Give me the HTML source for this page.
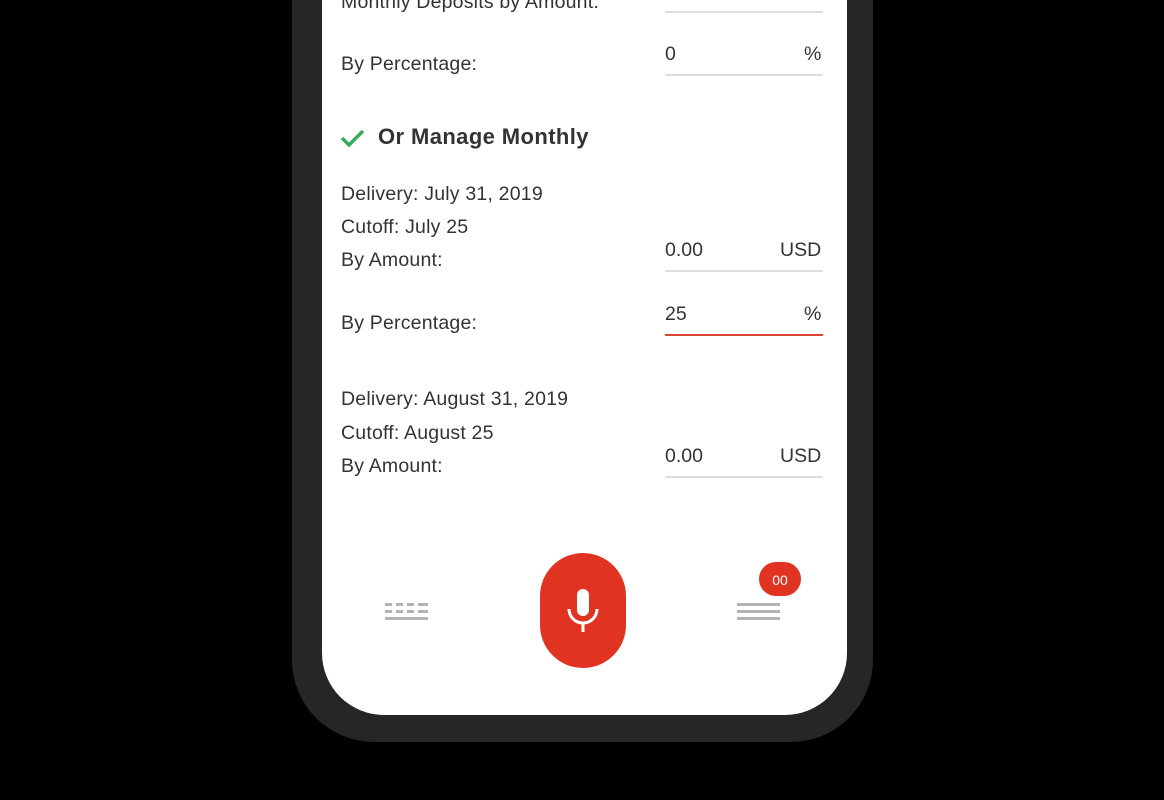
<!DOCTYPE html>
<html><head><style>
body{margin:0;width:1164px;height:800px;background:#000;position:relative;overflow:hidden;font-family:"Liberation Sans",Arial,sans-serif;color:#333}
.frame{position:absolute;left:292px;top:-100px;width:581px;height:842px;background:#262626;border-radius:0 0 82px 82px}
.screen{position:absolute;left:322px;top:-100px;width:525px;height:815px;background:#fff;border-radius:0 0 62px 62px}
.t{position:absolute;font-size:19.5px;letter-spacing:0.2px;white-space:nowrap;line-height:22px}
.f{position:absolute;left:665px;width:158px;border-bottom:2px solid #ddd;height:10px}
.f.red{border-color:#e0432f}
.v{position:absolute;font-size:19.5px;line-height:22px}
.bar{position:absolute;height:3px;background:#b3b3b3}
</style></head><body>
<div class="frame"></div>
<div class="screen"></div>
<div class="t" style="left:341px;top:-9px">Monthly Deposits by Amount:</div>
<div class="f" style="top:1px"></div>
<div class="t" style="left:341px;top:53px">By Percentage:</div>
<div class="v" style="left:665px;top:43px">0</div><div class="v" style="left:804px;top:43px">%</div>
<div class="f" style="top:64px"></div>
<svg style="position:absolute;left:340px;top:127px" width="25" height="22" viewBox="0 0 25 22"><path d="M2 11 L9 18 L23 4" stroke="#3aa85a" stroke-width="3.4" fill="none"/></svg>
<div class="t" style="left:378px;top:126px;font-size:22px;font-weight:bold;letter-spacing:0.4px">Or Manage Monthly</div>
<div class="t" style="left:341px;top:183px">Delivery: July 31, 2019</div>
<div class="t" style="left:341px;top:216px">Cutoff: July 25</div>
<div class="t" style="left:341px;top:249px">By Amount:</div>
<div class="v" style="left:665px;top:239px">0.00</div><div class="v" style="left:780px;top:239px">USD</div>
<div class="f" style="top:260px"></div>
<div class="t" style="left:341px;top:312px">By Percentage:</div>
<div class="v" style="left:665px;top:303px">25</div><div class="v" style="left:804px;top:303px">%</div>
<div class="f red" style="top:324px"></div>
<div class="t" style="left:341px;top:388px">Delivery: August 31, 2019</div>
<div class="t" style="left:341px;top:422px">Cutoff: August 25</div>
<div class="t" style="left:341px;top:455px">By Amount:</div>
<div class="v" style="left:665px;top:445px">0.00</div><div class="v" style="left:780px;top:445px">USD</div>
<div class="f" style="top:466px"></div>
<div class="bar" style="left:385px;top:603px;width:7px"></div><div class="bar" style="left:396px;top:603px;width:7px"></div><div class="bar" style="left:407px;top:603px;width:7px"></div><div class="bar" style="left:418px;top:603px;width:10px"></div>
<div class="bar" style="left:385px;top:610px;width:7px"></div><div class="bar" style="left:396px;top:610px;width:7px"></div><div class="bar" style="left:407px;top:610px;width:7px"></div><div class="bar" style="left:418px;top:610px;width:10px"></div>
<div class="bar" style="left:385px;top:617px;width:43px"></div>
<div style="position:absolute;left:540px;top:553px;width:86px;height:115px;border-radius:43px;background:#e03321"></div>
<svg style="position:absolute;left:560px;top:585px" width="46" height="50" viewBox="0 0 46 50"><rect x="17" y="4" width="12" height="27" rx="6" fill="#fff"/><path d="M9 24 A14 14 0 0 0 37 24" stroke="#fff" stroke-width="3" fill="none"/><rect x="21.5" y="37" width="3" height="10" fill="#fff"/></svg>
<div class="bar" style="left:737px;top:603px;width:43px"></div>
<div class="bar" style="left:737px;top:610px;width:43px"></div>
<div class="bar" style="left:737px;top:617px;width:43px"></div>
<div style="position:absolute;left:759px;top:562px;width:42px;height:34px;border-radius:17px;background:#e03321;color:#fff;font-size:14px;line-height:36px;text-align:center">00</div>
</body></html>
